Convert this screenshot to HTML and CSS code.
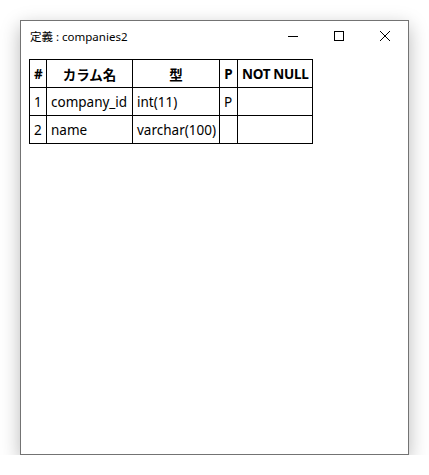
FILE: index.html
```html
<!DOCTYPE html>
<html lang="ja">
<head>
    <meta charset="UTF-8" />
    <title>定義 : companies2</title>
    <link rel="stylesheet" href="styles.css">
</head>
<body>
    <div class="window">
        <div class="titlebar">
            <span class="title">定義 : companies2</span>
            <div class="controls">
                <span class="ctl">
                    <svg width="10" height="10" viewBox="0 0 10 10"><path d="M0 5.5h10" stroke="#000" stroke-width="1"/></svg>
                </span>
                <span class="ctl">
                    <svg width="10" height="10" viewBox="0 0 10 10"><rect x="0.5" y="0.5" width="9" height="9" fill="none" stroke="#000" stroke-width="1"/></svg>
                </span>
                <span class="ctl">
                    <svg width="10" height="10" viewBox="0 0 10 10"><path d="M0 0L10 10M10 0L0 10" stroke="#000" stroke-width="1"/></svg>
                </span>
            </div>
        </div>
        <div class="content">
            <table class="defs">
                <colgroup>
                    <col class="c-no">
                    <col class="c-name">
                    <col class="c-type">
                    <col class="c-pk">
                    <col class="c-nn">
                </colgroup>
                <thead>
                    <tr>
                        <th>#</th>
                        <th>カラム名</th>
                        <th>型</th>
                        <th>P</th>
                        <th class="nn">NOT NULL</th>
                    </tr>
                </thead>
                <tbody>
                    <tr>
                        <td>1</td>
                        <td>company_id</td>
                        <td>int(11)</td>
                        <td>P</td>
                        <td></td>
                    </tr>
                    <tr>
                        <td>2</td>
                        <td>name</td>
                        <td>varchar(100)</td>
                        <td></td>
                        <td></td>
                    </tr>
                </tbody>
            </table>
        </div>
    </div>
</body>
</html>
```

FILE: styles.css
```css
body {
    margin: 0;
    background-color: #ffffff;
    font-family: "Noto Sans", "Noto Sans CJK JP", sans-serif;
    color: #000000;
}
.window {
    margin: 20px 0 0 20px;
    width: 387px;
    height: 433px;
    border: 1px solid #737373;
    background-color: #ffffff;
    box-shadow: 0 6px 18px rgba(0, 0, 0, 0.28);
}
.titlebar {
    display: flex;
    align-items: center;
    height: 30px;
    padding-left: 9px;
}
.title {
    font-size: 11.5px;
}
.controls {
    margin-left: auto;
    display: flex;
    height: 100%;
}
.ctl {
    width: 46px;
    display: flex;
    align-items: center;
    justify-content: center;
}
.ctl svg {
    display: block;
}
.content {
    padding: 8px 0 0 8px;
}
.defs {
    border-collapse: collapse;
    table-layout: fixed;
    width: 283px;
    font-size: 13.5px;
}
.defs th, .defs td {
    border: 1px solid #000000;
    height: 27px;
    padding: 0 4px;
    white-space: nowrap;
    overflow: visible;
}
.defs th {
    text-align: center;
    font-weight: bold;
}
.defs th.nn {
    letter-spacing: -0.3px;
}
.defs td {
    text-align: left;
}
.c-no {
    width: 17px;
}
.c-name {
    width: 86px;
}
.c-type {
    width: 87px;
}
.c-pk {
    width: 18px;
}
.c-nn {
    width: 75px;
}
```
